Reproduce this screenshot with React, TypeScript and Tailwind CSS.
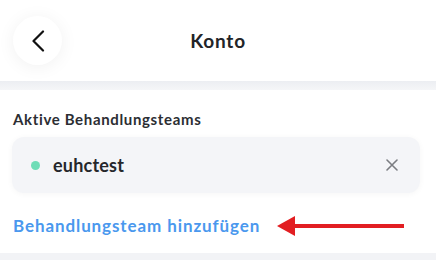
import React from "react";

const App: React.FC = () => {
  return (
    <div className="w-[436px] h-[260px] bg-white overflow-hidden font-['Lato','Noto_Sans',sans-serif]">
      {/* Kopfzeile */}
      <div className="h-[81px] grid grid-cols-[1fr_auto_1fr] items-center px-[13px]">
        <button className="w-[49px] h-[49px] rounded-full bg-white shadow-[0_2px_18px_rgba(0,0,0,0.06)] flex items-center justify-center">
          <svg width="14" height="22" viewBox="0 0 14 22" fill="none">
            <path d="M12 1.5L2.5 11L12 20.5" stroke="#111" strokeWidth="2.2" strokeLinecap="round" strokeLinejoin="round" />
          </svg>
        </button>
        <h1 className="text-[19px] font-bold text-[#222428] tracking-[0.8px] pt-[1px]">Konto</h1>
        <div />
      </div>
      <div className="h-[9px] bg-gradient-to-b from-[#eceef2] to-[#f5f6f8]" />

      {/* Aktive Behandlungsteams */}
      <div className="h-[163px] px-[12px] pt-[20px]">
        <h2 className="text-[15px] font-bold text-[#2c2e33] leading-[18px] pl-[1px] tracking-[0.65px]">
          Aktive Behandlungsteams
        </h2>
        <div className="mt-[9px] h-[56px] w-[408px] rounded-[12px] bg-[#f4f5f8] shadow-[0_1px_6px_rgba(0,0,0,0.04)] flex items-center pl-[19px] pr-[22px]">
          <span className="w-[9px] h-[9px] rounded-full bg-[#6fddb7]" />
          <span className="ml-[13px] text-[18px] font-bold text-[#25272b] tracking-[0.2px]">euhctest</span>
          <div className="flex-1" />
          <svg width="12" height="12" viewBox="0 0 12 12" fill="none">
            <path d="M1 1L11 11M11 1L1 11" stroke="#7b7d82" strokeWidth="1.6" strokeLinecap="round" />
          </svg>
        </div>
        <div className="mt-[20px] flex items-center">
          <span className="pl-[1px] text-[17px] font-bold text-[#4a98ee] tracking-[0.9px]">
            Behandlungsteam hinzufügen
          </span>
          <svg className="ml-auto mr-[20px]" width="127" height="22" viewBox="0 0 127 22">
            <polygon points="0,11 18,1 18,21" fill="#e21e22" />
            <rect x="16" y="9" width="111" height="4" fill="#e21e22" />
          </svg>
        </div>
      </div>
      <div className="h-[7px] bg-[#f2f3f6]" />
    </div>
  );
};

export default App;
